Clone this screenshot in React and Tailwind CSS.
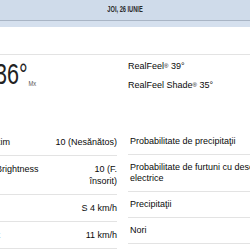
import React from 'react'

const leftRows = [
  { label: 'Indice UV maxim', value: ['10 (Nesănătos)'] },
  { label: 'Indice UV de Brightness', value: ['10 (F.', 'însorit)'] },
  { label: 'Vânt', value: ['S 4 km/h'] },
  { label: 'Rafale de vânt', value: ['11 km/h'] },
]

const rightRows = [
  { label: ['Probabilitate de precipitaţii'], value: '1%' },
  { label: ['Probabilitate de furtuni cu descărcări', 'electrice'], value: '0%' },
  { label: ['Precipitaţii'], value: '0.0 mm' },
  { label: ['Nori'], value: '9%' },
]

function Sun() {
  return (
    <svg width="40" height="40" viewBox="0 0 40 40" className="shrink-0">
      <circle cx="20" cy="20" r="9" fill="#f4b400" />
    </svg>
  )
}

export default function App() {
  return (
    <div className="w-[250px] h-[250px] overflow-hidden bg-white font-['Liberation_Sans',Arial,sans-serif] text-[#0a0a0a]">
      <div className="h-[21px] bg-[#cfdbea] border-b border-[#a9b5c5] flex items-center justify-center">
        <span className="text-[9px] font-bold text-[#2a2a2a] scale-x-[0.63]">JOI, 26 IUNIE</span>
      </div>
      <div className="h-[6px] bg-[#d5e0ee]" />
      <div className="h-[27px]" />

      <div className="border-t border-[#e3e3e3] ml-[-58px] w-[400px]">
        <div className="flex gap-[11px] h-[74px]">
          <div className="w-[175px] shrink-0 flex items-start gap-[13px] pt-[4px]">
            <Sun />
            <div className="flex items-end origin-left scale-x-[0.72]">
              <span className="text-[30px] leading-[30px] text-[#222]">36°</span>
              <span className="text-[8px] leading-[10px] text-[#555] ml-[1px]">Mx</span>
            </div>
          </div>
          <div className="w-[175px] shrink-0 pt-[5px] flex flex-col gap-[7px] text-[9px] leading-[12px]">
            <span>
              RealFeel<span className="text-[6px] align-top">®</span> 39°
            </span>
            <span>
              RealFeel Shade<span className="text-[6px] align-top">®</span> 35°
            </span>
          </div>
        </div>

        <div className="flex gap-[11px] items-start text-[9px]">
          <div className="w-[175px] shrink-0 flex flex-col">
            {leftRows.map((row, i) => (
              <div
                key={i}
                className="flex justify-between py-[7px] leading-[12px] border-b border-[#e3e3e3]"
              >
                <span>{row.label}</span>
                <span className="text-right">
                  {row.value.map((v, j) => (
                    <span key={j} className="block">{v}</span>
                  ))}
                </span>
              </div>
            ))}
          </div>
          <div className="w-[175px] shrink-0 flex flex-col">
            {rightRows.map((row, i) => (
              <div
                key={i}
                className="flex justify-between py-[7px] pl-[2px] leading-[11px] border-b border-[#e3e3e3]"
              >
                <span>
                  {row.label.map((l, j) => (
                    <span key={j} className="block">{l}</span>
                  ))}
                </span>
                <span className="text-right">{row.value}</span>
              </div>
            ))}
          </div>
        </div>
      </div>
    </div>
  )
}
